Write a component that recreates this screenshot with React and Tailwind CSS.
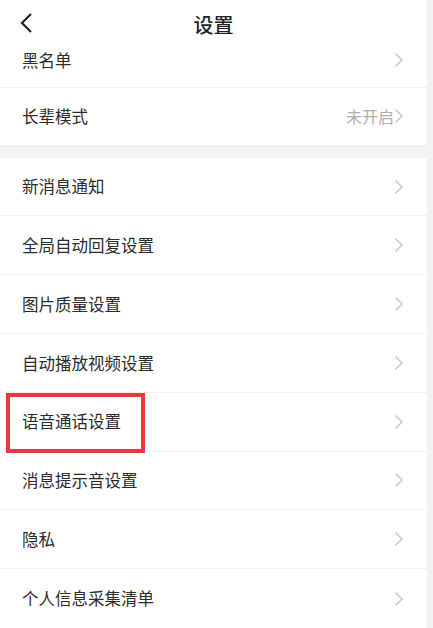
import React from 'react';

const font = { fontFamily: '"Noto Sans CJK SC", "Noto Sans", sans-serif' };

const Chevron = () => (
  <svg width="10" height="16" viewBox="0 0 10 16" className="shrink-0">
    <path d="M1.5 1.5 L8 8 L1.5 14.5" fill="none" stroke="#c9c9c9" strokeWidth="1.6" />
  </svg>
);

const Row = ({ label, value, boxed, last }) => (
  <div className={`relative flex items-center justify-between h-[59px] pl-[22px] pr-[23px] ${last ? '' : 'border-b border-[#f0f0f0]'}`}>
    <span className="text-[16.5px] text-[#2b2b2b]">{label}</span>
    <div className="flex items-center">
      {value && <span className="text-[16px] text-[#b0b0b0]">{value}</span>}
      <Chevron />
    </div>
    {boxed && (
      <div className="absolute left-[6px] top-0 w-[139px] h-[60px] border-[4px] border-[#e8383c]" />
    )}
  </div>
);

const App = () => {
  const group2 = ['新消息通知', '全局自动回复设置', '图片质量设置', '自动播放视频设置', '语音通话设置', '消息提示音设置', '隐私', '个人信息采集清单'];
  return (
    <div className="w-[433px] h-[628px] overflow-hidden bg-white flex" style={font}>
      <div className="w-[427px] flex flex-col">
        <div className="h-[31px] relative shrink-0">
          <svg width="14" height="22" viewBox="0 0 14 22" className="absolute left-[19px] top-[12px]">
            <path d="M12 2 L3 11 L12 20" fill="none" stroke="#222" strokeWidth="2.2" />
          </svg>
          <div className="absolute left-0 right-0 top-[10px] text-center text-[20px] leading-[30px] font-medium text-[#222]">设置</div>
        </div>
        <div className="h-[57px] flex items-center justify-between pl-[22px] pr-[23px] border-b border-[#f0f0f0] pt-[2px]">
          <span className="text-[16.5px] text-[#2b2b2b]">黑名单</span>
          <Chevron />
        </div>
        <div className="h-[57px] flex items-center justify-between pl-[22px] pr-[23px]">
          <span className="text-[16.5px] text-[#2b2b2b]">长辈模式</span>
          <div className="flex items-center">
            <span className="text-[16px] text-[#b0b0b0]">未开启</span>
            <Chevron />
          </div>
        </div>
        <div className="h-[13px] bg-[#f3f3f6] shrink-0" />
        {group2.map((l, i) => (
          <Row key={l} label={l} boxed={l === '语音通话设置'} last={i === group2.length - 1} />
        ))}
      </div>
      <div className="w-[6px] bg-[#f3f3f5]" />
    </div>
  );
};

export default App;
